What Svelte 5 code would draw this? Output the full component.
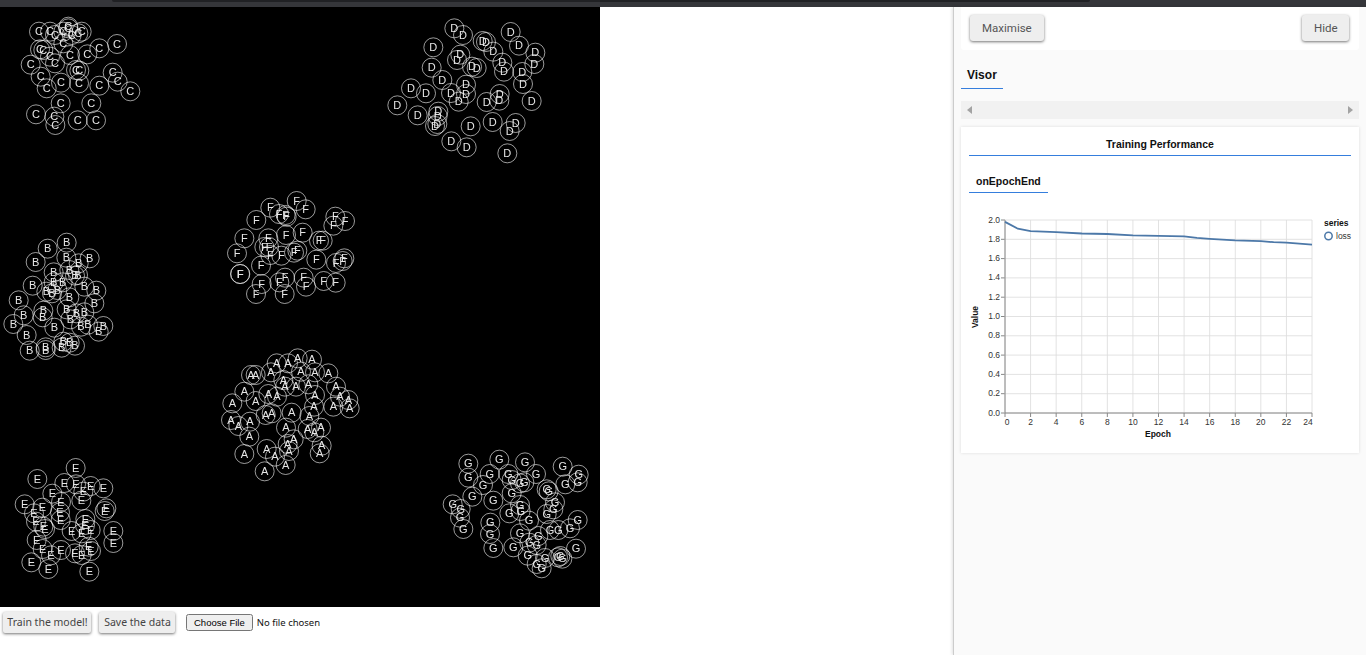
<script>
  const groups = [
    { l: 'C', ox: 0, oy: 0, p: [[117,95],[150,95],[165,105],[205,85],[190,95],[215,105],[245,95],[235,100],[190,130],[120,148],[130,150],[150,170],[165,190],[210,165],[262,163],[298,145],[351,132],[92,194],[122,230],[183,248],[140,265],[228,210],[238,212],[237,250],[298,257],[338,218],[353,245],[391,274],[182,310],[274,310],[108,343],[163,350],[166,375],[233,361],[288,361],[205,80]] },
    { l: 'D', ox: 380, oy: 10, p: [[223,55],[249,75],[392,66],[308,93],[318,96],[160,112],[417,107],[340,125],[466,128],[241,134],[231,150],[367,158],[463,162],[155,173],[276,170],[290,174],[372,185],[427,186],[187,210],[429,222],[258,224],[93,235],[138,250],[213,249],[258,252],[236,275],[359,252],[358,272],[320,276],[455,273],[52,286],[113,316],[175,305],[173,318],[165,348],[172,342],[272,349],[338,336],[407,339],[389,363],[214,394],[260,412],[382,430]] },
    { l: 'F', ox: 220, oy: 185, p: [[230,48],[257,73],[151,68],[177,87],[197,90],[200,95],[109,105],[346,95],[375,108],[340,122],[73,160],[145,160],[198,150],[248,143],[297,167],[308,167],[133,186],[147,186],[151,210],[184,212],[222,203],[232,197],[51,205],[289,224],[348,234],[368,228],[373,220],[123,242],[61,267],[60,267],[195,278],[178,292],[125,297],[251,278],[258,305],[311,288],[347,293],[108,327],[194,327]] },
    { l: 'B', ox: 0, oy: 230, p: [[200,38],[143,56],[107,96],[199,83],[269,85],[236,100],[161,127],[208,120],[98,167],[234,135],[225,137],[161,157],[188,157],[253,170],[139,185],[156,190],[172,180],[289,182],[208,202],[56,211],[283,220],[130,242],[128,262],[71,256],[200,238],[229,250],[253,247],[211,268],[40,282],[163,293],[243,290],[264,284],[310,288],[296,305],[80,315],[89,362],[137,352],[137,360],[185,353],[190,335],[209,338],[225,347]] },
    { l: 'A', ox: 215, oy: 345, p: [[248,40],[291,44],[185,55],[219,55],[258,80],[300,82],[340,85],[168,82],[108,90],[122,90],[205,105],[210,125],[243,125],[280,118],[363,125],[88,140],[160,147],[186,155],[122,168],[300,150],[52,175],[375,155],[400,165],[355,185],[297,185],[404,190],[230,203],[283,213],[152,210],[170,205],[48,225],[105,230],[70,243],[213,248],[278,252],[298,262],[318,248],[103,275],[236,283],[218,297],[222,318],[320,302],[314,325],[155,312],[180,335],[88,327],[212,360],[149,379]] },
    { l: 'E', ox: 10, oy: 455, p: [[197,39],[82,72],[163,84],[198,88],[242,93],[280,100],[220,110],[127,116],[214,137],[44,148],[153,141],[97,158],[72,175],[150,172],[152,195],[289,160],[284,168],[78,200],[226,192],[100,215],[105,222],[225,210],[185,228],[242,225],[215,235],[310,228],[310,264],[80,255],[98,282],[236,275],[243,288],[153,285],[123,301],[195,295],[215,300],[64,322],[115,342],[238,350]] },
    { l: 'G', ox: 440, oy: 450, p: [[178,29],[85,41],[255,37],[368,50],[85,83],[149,72],[205,72],[288,72],[416,74],[129,105],[215,90],[240,100],[253,97],[376,103],[413,97],[320,118],[326,124],[97,140],[160,152],[215,130],[345,157],[38,163],[62,177],[240,165],[242,183],[340,178],[208,190],[320,192],[60,203],[267,212],[151,218],[70,237],[413,210],[150,252],[240,250],[295,258],[330,240],[355,240],[390,235],[160,294],[220,292],[268,278],[290,285],[408,296],[263,317],[315,324],[354,322],[361,318],[367,326],[290,342],[305,355]] }
  ];
  // zoomed crops are 3x; canvas starts 7px below the page top
  const nodes = groups.flatMap((g) =>
    g.p.map(([x, y]) => ({ l: g.l, x: g.ox + x / 3, y: g.oy + y / 3 - 7 }))
  );

  const plot = { left: 44, right: 351, top: 19, bottom: 212 };
  const sx = (v) => plot.left + (v / 24) * (plot.right - plot.left);
  const sy = (v) => plot.bottom - (v / 2) * (plot.bottom - plot.top);
  const xTicks = Array.from({ length: 13 }, (_, i) => i * 2);
  const yTicks = Array.from({ length: 11 }, (_, i) => i * 0.2);
  const loss = [[0,1.98],[1,1.91],[2,1.885],[4,1.875],[6,1.86],[8,1.855],[10,1.84],[12,1.835],[14,1.83],[15,1.815],[16,1.805],[18,1.79],[20,1.78],[21,1.77],[22,1.765],[24,1.745]];
  const line = loss.map(([e, v]) => `${sx(e).toFixed(1)},${sy(v).toFixed(1)}`).join(' ');
</script>

<div class="page">
  <div class="chrome"><div class="chrome-tab"></div></div>
  <div class="body-row">
    <main class="left">
      <svg class="field" viewBox="0 0 600 600" width="600" height="600">
        <rect width="600" height="600" fill="#000" />
        <g class="soft">
          {#each nodes as n}
            <circle cx={n.x} cy={n.y} r="9.5" class="ring" />
            <text x={n.x} y={n.y + 3.8} class="node-label">{n.l}</text>
          {/each}
        </g>
      </svg>
      <div class="controls">
        <button class="btn">Train the model!</button>
        <button class="btn">Save the data</button>
        <input class="file" type="file" />
      </div>
    </main>

    <aside class="visor">
      <div class="visor-controls">
        <button class="vbtn">Maximise</button>
        <button class="vbtn hide">Hide</button>
      </div>
      <div class="tabs"><span class="tab">Visor</span></div>
      <div class="scroller">
        <svg width="6" height="8" viewBox="0 0 6 8"><path d="M5 0v8L0 4z" fill="#a3a3a3" /></svg>
        <svg width="6" height="8" viewBox="0 0 6 8"><path d="M1 0v8l5-4z" fill="#a3a3a3" /></svg>
      </div>
      <section class="card">
        <h2 class="card-title">Training Performance</h2>
        <div class="subtabs"><span class="subtab">onEpochEnd</span></div>
        <svg class="chart" width="398" height="240" viewBox="0 0 398 240">
          {#each yTicks as v}
            <line x1={plot.left} x2={plot.right} y1={sy(v)} y2={sy(v)} class="grid" />
            <line x1={plot.left - 4} x2={plot.left} y1={sy(v)} y2={sy(v)} class="tick" />
            <text x={plot.left - 5} y={sy(v) + 2.5} class="tl end">{v.toFixed(1)}</text>
          {/each}
          {#each xTicks as v}
            <line x1={sx(v)} x2={sx(v)} y1={plot.top} y2={plot.bottom} class="grid" />
            <line x1={sx(v)} x2={sx(v)} y1={plot.bottom} y2={plot.bottom + 4} class="tick" />
            <text x={v === 0 ? sx(v) + 2 : v === 24 ? sx(v) - 4 : sx(v)} y={plot.bottom + 12} class="tl mid">{v}</text>
          {/each}
          <line x1={plot.left} x2={plot.left} y1={plot.top} y2={plot.bottom} class="axis" />
          <line x1={plot.left} x2={plot.right} y1={plot.bottom} y2={plot.bottom} class="axis" />
          <polyline points={line} class="series" />
          <text x="197" y="236" class="axis-title mid">Epoch</text>
          <text x="0" y="0" transform="translate(17 116) rotate(-90)" class="axis-title mid">Value</text>
          <text x="363" y="25" class="axis-title">series</text>
          <circle cx="367.500" cy="35" r="3.700" class="legend-dot" />
          <text x="375" y="37.500" class="tl">loss</text>
        </svg>
      </section>
    </aside>
  </div>
</div>

<style>
  :global(body) {
    margin: 0;
    background: #fff;
    overflow: hidden;
  }
  .page {
    width: 1366px;
    height: 655px;
    display: flex;
    flex-direction: column;
    overflow: hidden;
  }
  .chrome {
    height: 7px;
    background: #35363a;
    flex: none;
    padding-left: 112px;
  }
  .chrome-tab {
    width: 978px;
    height: 2px;
    background: #202124;
    border-radius: 0 0 6px 6px;
  }
  .body-row {
    flex: 1;
    display: flex;
    justify-content: space-between;
    min-height: 0;
  }
  .left {
    width: 600px;
  }
  .field {
    display: block;
  }
  .soft {
    filter: blur(0.35px);
  }
  .ring {
    fill: none;
    stroke: #fff;
    stroke-opacity: 0.6;
    stroke-width: 1;
  }
  .node-label {
    fill: #e6e6e6;
    font: 11px "Liberation Sans", Arial, sans-serif;
    text-anchor: middle;
  }
  .controls {
    display: flex;
    align-items: center;
    padding: 5px 0 0 3px;
  }
  .btn {
    height: 21px;
    padding: 0 0 1px 1px;
    margin-right: 8px;
    border: none;
    border-radius: 2px;
    background: #eee;
    color: #444;
    box-shadow: 0 1px 3px rgba(0, 0, 0, 0.55);
    font: 10.500px "Noto Sans", Verdana, sans-serif;
    white-space: nowrap;
    width: 88px;
  }
  .btn + .btn {
    width: 76px;
    margin-right: 11px;
  }
  .file {
    font: 9.500px "Noto Sans", Verdana, sans-serif;
    color: #111;
    width: 180px;
  }
  .visor {
    box-sizing: border-box;
    width: 413px;
    background: #fafafa;
    border-left: 1px solid #ccc;
    box-shadow: -1px 0 3px rgba(0, 0, 0, 0.12);
    padding: 0 7px 0 7px;
  }
  .visor-controls {
    height: 43px;
    background: #fff;
    border-radius: 0 0 3px 3px;
    display: flex;
    justify-content: space-between;
    align-items: flex-start;
    padding: 8px 10px 0 9px;
    box-sizing: border-box;
  }
  .vbtn {
    height: 26px;
    border: none;
    border-radius: 3px;
    background: #eee;
    color: #555;
    font: 11.500px Roboto, "Liberation Sans", sans-serif;
    padding: 0 12px;
    box-shadow: 0 1px 3px rgba(0, 0, 0, 0.55);
  }
  .hide {
    padding: 0 12px;
    width: 47px;
  }
  .tabs {
    margin-top: 11px;
  }
  .tab {
    display: inline-block;
    box-sizing: border-box;
    width: 42px;
    height: 28px;
    padding: 7px 0 0 6px;
    border-bottom: 1px solid #357edd;
    font: 600 12px "Liberation Sans", Arial, sans-serif;
    color: #111;
  }
  .scroller {
    margin-top: 12px;
    height: 18px;
    background: #f1f1f1;
    display: flex;
    justify-content: space-between;
    align-items: center;
    padding: 0 6px;
  }
  .card {
    margin-top: 8px;
    height: 326px;
    background: #fff;
    box-shadow: 0 0 3px rgba(0, 0, 0, 0.12);
    padding: 0 8px;
    box-sizing: border-box;
  }
  .card-title {
    margin: 0;
    height: 29px;
    box-sizing: border-box;
    padding-top: 11px;
    border-bottom: 1px solid #357edd;
    text-align: center;
    font: 600 10.500px "Liberation Sans", Arial, sans-serif;
    color: #111;
  }
  .subtabs {
    margin-top: 12px;
  }
  .subtab {
    display: inline-block;
    box-sizing: border-box;
    width: 79px;
    height: 25px;
    padding: 7px 0 0 7px;
    border-bottom: 1px solid #357edd;
    font: 600 10.500px "Liberation Sans", Arial, sans-serif;
    color: #111;
  }
  .chart {
    display: block;
    margin: 8px 0 0 -8px;
  }
  .grid {
    stroke: #ddd;
    stroke-width: 1;
    opacity: 0.85;
  }
  .tick {
    stroke: #888;
    stroke-width: 1;
  }
  .axis {
    stroke: #888;
    stroke-width: 1;
  }
  .series {
    fill: none;
    stroke: #4c78a8;
    stroke-width: 1.800;
  }
  .legend-dot {
    fill: none;
    stroke: #4c78a8;
    stroke-width: 1.500;
  }
  .tl {
    font: 8.500px "Liberation Sans", Arial, sans-serif;
    fill: #333;
  }
  .axis-title {
    font: bold 8.500px "Liberation Sans", Arial, sans-serif;
    fill: #111;
  }
  .end {
    text-anchor: end;
  }
  .mid {
    text-anchor: middle;
  }
</style>
